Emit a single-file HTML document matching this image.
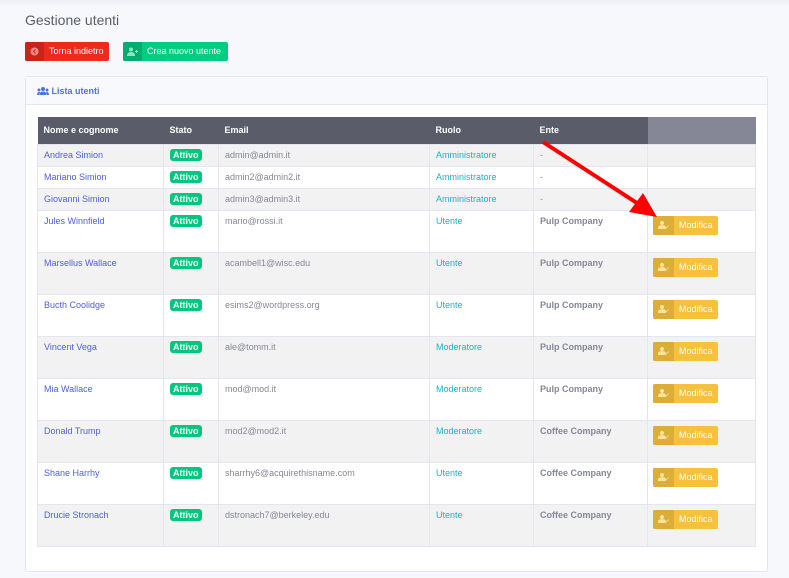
<!DOCTYPE html>
<html><head><style>
*{box-sizing:border-box;margin:0;padding:0}
body{width:789px;height:578px;background:#f7f8fc;font-family:"Liberation Sans",sans-serif;position:relative;overflow:hidden}
.top{position:absolute;left:0;top:0;width:789px;height:8px;background:linear-gradient(#eceef4,#f7f8fc)}
h1{position:absolute;left:25px;top:12px;font-size:14px;font-weight:normal;color:#5a5c69}
.btn{position:absolute;top:42px;height:19px;border-radius:2px;color:#fff;font-size:9px;line-height:19px;display:flex;white-space:nowrap}
.btn .ic{width:19px;height:19px;flex:none;background:rgba(0,0,0,.15);display:flex;align-items:center;justify-content:center}
.btn .t{padding:0 5px}
.card{position:absolute;left:25px;top:76px;width:743px;height:496px;background:#fff;border:1px solid #e3e6f0;border-radius:3px}
.ch{height:28px;border-bottom:1px solid #e3e6f0;background:#f8f9fc;color:#4e73df;font-size:9px;font-weight:bold;line-height:28px;padding-left:11px}
table{position:absolute;left:11px;top:40px;width:719px;border-collapse:collapse;font-size:9px}
th{background:#5a5c69;color:#fff;text-align:left;height:27px;padding:0 6px;font-weight:bold}
th.last{background:#858796}
td{border:1px solid #e3e6f0;vertical-align:top;padding:5px 6px 0;color:#858796;white-space:nowrap}
tr.s td{height:22px}
tr.b td{height:42px}
tbody tr:nth-child(odd) td{background:#f2f2f3}
.n{color:#4e5fd8}
.r{color:#17b3c8}
.e{font-weight:bold}
.bd{display:inline-block;background:#00c77f;color:#fff;font-weight:bold;border-radius:3px;padding:1px 3px;margin-top:-1px}
.mod{display:inline-flex;height:19px;width:65px;background:#f6c23e;border-radius:2px;color:#fff;line-height:19px;margin-left:-1px}
.mod .ic{width:21px;background:rgba(0,0,0,.1);display:flex;align-items:center;justify-content:center}
.mod .t{padding:0 5px}
</style></head><body>
<div class="top"></div>
<h1>Gestione utenti</h1>
<div class="btn" style="left:25px;width:84px;background:#ee2a1f"><span class="ic"><svg width="9" height="9"><circle cx="4.5" cy="4.5" r="4" fill="#f08a84"/><path d="M5.5 2.5L3.5 4.5L5.5 6.5" stroke="#d22" fill="none"/></svg></span><span class="t">Torna indietro</span></div>
<div class="btn" style="left:123px;width:105px;background:#00cc82"><span class="ic"><svg width="11" height="9"><circle cx="4" cy="2.5" r="2" fill="#8de3c0"/><path d="M0 9Q0 5 4 5Q8 5 8 9Z" fill="#8de3c0"/><path d="M9.5 3v3M8 4.5h3" stroke="#8de3c0"/></svg></span><span class="t">Crea nuovo utente</span></div>
<div class="card"><div class="ch"><svg width="12" height="8" style="vertical-align:-1px"><circle cx="6" cy="2" r="2" fill="#4e73df"/><circle cx="2" cy="3" r="1.5" fill="#4e73df"/><circle cx="10" cy="3" r="1.5" fill="#4e73df"/><path d="M2.5 8Q2.5 4.5 6 4.5Q9.5 4.5 9.5 8Z M0 8Q0 5 2 5L3 5L2 8Z M12 8Q12 5 10 5L9 5L10 8Z" fill="#4e73df"/></svg> Lista utenti</div>
<table>
<thead><tr><th style="width:126px">Nome e cognome</th><th style="width:55px">Stato</th><th style="width:211px">Email</th><th style="width:104px">Ruolo</th><th style="width:114px">Ente</th><th class="last"></th></tr></thead>
<tbody>
<tr class="s"><td class="n">Andrea Simion</td><td><span class="bd">Attivo</span></td><td>admin@admin.it</td><td class="r">Amministratore</td><td>-</td><td></td></tr>
<tr class="s"><td class="n">Mariano Simion</td><td><span class="bd">Attivo</span></td><td>admin2@admin2.it</td><td class="r">Amministratore</td><td>-</td><td></td></tr>
<tr class="s"><td class="n">Giovanni Simion</td><td><span class="bd">Attivo</span></td><td>admin3@admin3.it</td><td class="r">Amministratore</td><td>-</td><td></td></tr>
<tr class="b"><td class="n">Jules Winnfield</td><td><span class="bd">Attivo</span></td><td>mario@rossi.it</td><td class="r">Utente</td><td class="e">Pulp Company</td><td><span class="mod"><span class="ic"><svg width="11" height="8"><circle cx="4" cy="2" r="2" fill="#fbe3a0"/><path d="M0 8Q0 4.5 4 4.5Q7 4.5 7.5 6L6.5 8Z M7 8L10.5 4.5" fill="#fbe3a0" stroke="#fbe3a0" stroke-width=".8"/></svg></span><span class="t">Modifica</span></span></td></tr>
<tr class="b"><td class="n">Marsellus Wallace</td><td><span class="bd">Attivo</span></td><td>acambell1@wisc.edu</td><td class="r">Utente</td><td class="e">Pulp Company</td><td><span class="mod"><span class="ic"><svg width="11" height="8"><circle cx="4" cy="2" r="2" fill="#fbe3a0"/><path d="M0 8Q0 4.5 4 4.5Q7 4.5 7.5 6L6.5 8Z M7 8L10.5 4.5" fill="#fbe3a0" stroke="#fbe3a0" stroke-width=".8"/></svg></span><span class="t">Modifica</span></span></td></tr>
<tr class="b"><td class="n">Bucth Coolidge</td><td><span class="bd">Attivo</span></td><td>esims2@wordpress.org</td><td class="r">Utente</td><td class="e">Pulp Company</td><td><span class="mod"><span class="ic"><svg width="11" height="8"><circle cx="4" cy="2" r="2" fill="#fbe3a0"/><path d="M0 8Q0 4.5 4 4.5Q7 4.5 7.5 6L6.5 8Z M7 8L10.5 4.5" fill="#fbe3a0" stroke="#fbe3a0" stroke-width=".8"/></svg></span><span class="t">Modifica</span></span></td></tr>
<tr class="b"><td class="n">Vincent Vega</td><td><span class="bd">Attivo</span></td><td>ale@tomm.it</td><td class="r">Moderatore</td><td class="e">Pulp Company</td><td><span class="mod"><span class="ic"><svg width="11" height="8"><circle cx="4" cy="2" r="2" fill="#fbe3a0"/><path d="M0 8Q0 4.5 4 4.5Q7 4.5 7.5 6L6.5 8Z M7 8L10.5 4.5" fill="#fbe3a0" stroke="#fbe3a0" stroke-width=".8"/></svg></span><span class="t">Modifica</span></span></td></tr>
<tr class="b"><td class="n">Mia Wallace</td><td><span class="bd">Attivo</span></td><td>mod@mod.it</td><td class="r">Moderatore</td><td class="e">Pulp Company</td><td><span class="mod"><span class="ic"><svg width="11" height="8"><circle cx="4" cy="2" r="2" fill="#fbe3a0"/><path d="M0 8Q0 4.5 4 4.5Q7 4.5 7.5 6L6.5 8Z M7 8L10.5 4.5" fill="#fbe3a0" stroke="#fbe3a0" stroke-width=".8"/></svg></span><span class="t">Modifica</span></span></td></tr>
<tr class="b"><td class="n">Donald Trump</td><td><span class="bd">Attivo</span></td><td>mod2@mod2.it</td><td class="r">Moderatore</td><td class="e">Coffee Company</td><td><span class="mod"><span class="ic"><svg width="11" height="8"><circle cx="4" cy="2" r="2" fill="#fbe3a0"/><path d="M0 8Q0 4.5 4 4.5Q7 4.5 7.5 6L6.5 8Z M7 8L10.5 4.5" fill="#fbe3a0" stroke="#fbe3a0" stroke-width=".8"/></svg></span><span class="t">Modifica</span></span></td></tr>
<tr class="b"><td class="n">Shane Harrhy</td><td><span class="bd">Attivo</span></td><td>sharrhy6@acquirethisname.com</td><td class="r">Utente</td><td class="e">Coffee Company</td><td><span class="mod"><span class="ic"><svg width="11" height="8"><circle cx="4" cy="2" r="2" fill="#fbe3a0"/><path d="M0 8Q0 4.5 4 4.5Q7 4.5 7.5 6L6.5 8Z M7 8L10.5 4.5" fill="#fbe3a0" stroke="#fbe3a0" stroke-width=".8"/></svg></span><span class="t">Modifica</span></span></td></tr>
<tr class="b"><td class="n">Drucie Stronach</td><td><span class="bd">Attivo</span></td><td>dstronach7@berkeley.edu</td><td class="r">Utente</td><td class="e">Coffee Company</td><td><span class="mod"><span class="ic"><svg width="11" height="8"><circle cx="4" cy="2" r="2" fill="#fbe3a0"/><path d="M0 8Q0 4.5 4 4.5Q7 4.5 7.5 6L6.5 8Z M7 8L10.5 4.5" fill="#fbe3a0" stroke="#fbe3a0" stroke-width=".8"/></svg></span><span class="t">Modifica</span></span></td></tr>
</tbody></table></div>
<svg style="position:absolute;left:0;top:0" width="789" height="578"><line x1="543" y1="142" x2="640" y2="205" stroke="#f00" stroke-width="4"/><path d="M657 217L629 212L643 193Z" fill="#f00"/></svg>
</body></html>
